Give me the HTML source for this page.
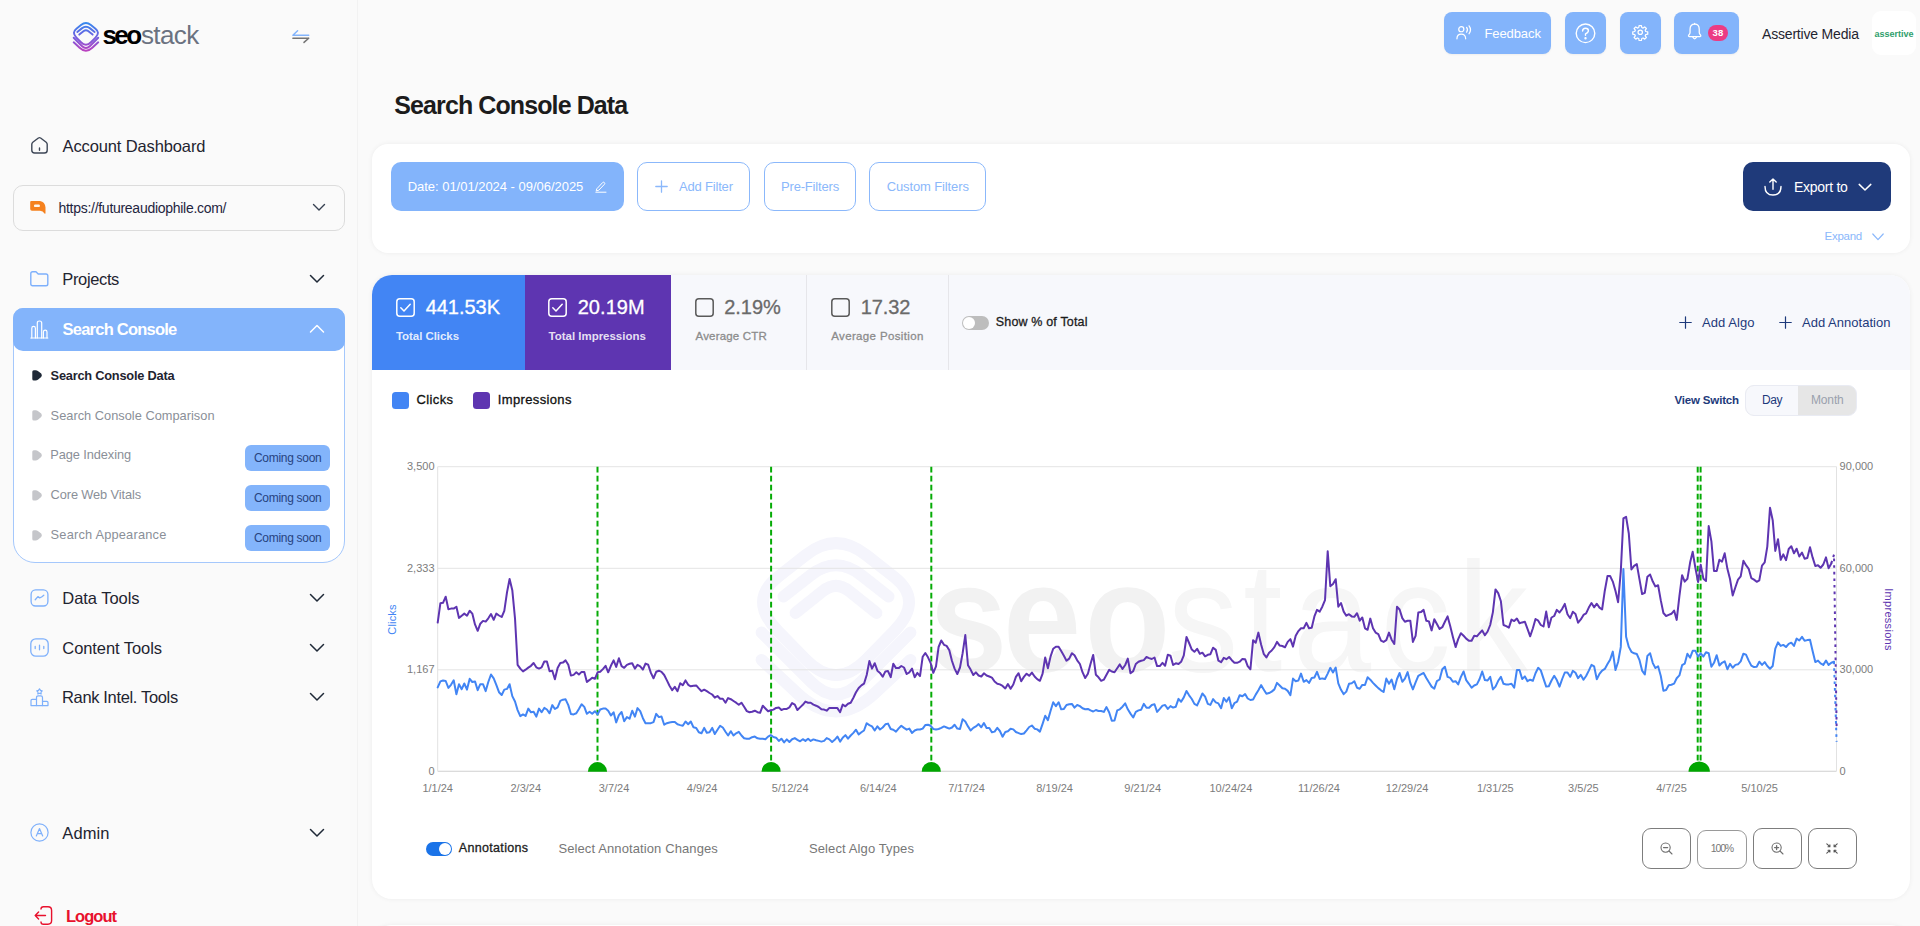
<!DOCTYPE html>
<html lang="en">
<head>
<meta charset="utf-8">
<title>Search Console Data - seostack</title>
<style>
*{box-sizing:border-box;margin:0;padding:0}
html,body{width:1920px;height:926px;overflow:hidden}
body{background:#fafafa;font-family:"Liberation Sans",sans-serif;color:#1f2937;position:relative}
.abs{position:absolute}
.t{position:absolute;white-space:nowrap;line-height:1}
svg{position:absolute;overflow:visible}
#sidebar{position:absolute;left:0;top:0;width:358px;height:926px;background:#fafafa;border-right:1px solid #f2f2f2}
.badge{position:absolute;left:245px;width:85px;height:26px;border-radius:6px;background:#83b4fb}
.hbtn{position:absolute;top:12px;height:42px;border-radius:8px;background:#83b4fb;box-shadow:0 1px 2px rgba(0,0,0,.05)}
.card{position:absolute;left:372px;width:1538px;background:#fff;border-radius:18px;box-shadow:0 0 5px rgba(0,0,0,.06)}
.fbtn{position:absolute;top:162px;height:49px;border-radius:10px;border:1px solid #8bb8fb;background:#fff}
.ax{font-size:11px;fill:#7c7c7c;font-family:"Liberation Sans",sans-serif}
</style>
</head>
<body>
<div id="sidebar">
<!-- logo -->
<svg style="left:72px;top:21px" width="28" height="32" viewBox="0 0 28 32">
<defs><linearGradient id="lg" gradientUnits="userSpaceOnUse" x1="0" y1="0" x2="0" y2="31"><stop offset="0" stop-color="#2f8ff0"/><stop offset="0.5" stop-color="#6e5fe0"/><stop offset="1" stop-color="#c040bd"/></linearGradient></defs>
<g fill="none" stroke="url(#lg)" stroke-width="1.95" stroke-linecap="round" stroke-linejoin="round">
<path d="M18.91 4.06 L23.49 7.66 Q28.45 11.55 23.49 16.6 L18.91 21.27 Q13.95 26.33 8.99 21.27 L4.41 16.6 Q-0.55 11.55 4.41 7.66 L8.99 4.06 Q13.95 0.17 18.91 4.06 Z"/>
<path d="M5.3 10.9 L9.77 7.39 Q13.95 4.11 18.13 7.39 L22.6 10.9"/>
<path d="M7.3 13.6 L11.77 10.02 Q13.95 8.28 16.13 10.02 L20.6 13.6"/>
<path d="M1.7 16.8 L9.85 24.95 Q13.95 29.05 18.05 24.95 L26.2 16.8"/>
<path d="M1.7 21.3 L7.6 26.83 Q13.95 32.77 20.3 26.83 L26.2 21.3"/>
</g></svg>
<span class="t" style="left:102.50px;top:21.99px;font-size:26px;font-weight:700;color:#000;letter-spacing:-2.601px;">seo</span>
<span class="t" style="left:141.00px;top:21.99px;font-size:26px;color:#6b7280;letter-spacing:-0.637px;">stack</span>
<!-- collapse arrows -->
<svg style="left:291px;top:29px" width="19" height="15" viewBox="0 0 19 15" fill="none" stroke-width="1.5" stroke-linecap="round" stroke-linejoin="round">
<path d="M1.9 6.2 H17.7 M1.9 6.2 L6.6 1.8" stroke="#83b4fb"/>
<path d="M1.9 9.2 H17.7 M17.7 9.2 L13 13.4" stroke="#747474"/>
</svg>
<!-- Account dashboard -->
<svg style="left:31px;top:137px" width="17" height="17" viewBox="0 0 17 17" fill="none" stroke="#3d4656" stroke-width="1.4" stroke-linecap="round" stroke-linejoin="round">
<path d="M0.8 7.2 Q0.8 6 1.8 5.2 L7.4 1 Q8.5 0.3 9.6 1 L15.2 5.2 Q16.2 6 16.2 7.2 V13.2 Q16.2 16 13.4 16 H3.6 Q0.8 16 0.8 13.2 Z"/>
<path d="M8.5 11 V13.2"/></svg>
<span class="t" style="left:62.50px;top:137.83px;font-size:16.5px;color:#1f2430;letter-spacing:-0.125px;">Account Dashboard</span>
<!-- site select -->
<div class="abs" style="left:13px;top:185px;width:332px;height:46px;border:1px solid #dcdcdc;border-radius:10px;background:#fafafa"></div>
<svg style="left:30px;top:200px" width="17" height="15" viewBox="0 0 17 15">
<path d="M1.3 1 H10 Q15.1 1.8 15.5 7.6 V12.8 Q15.5 14.5 14.5 13.4 Q13 10.9 10 10.8 H2 Q0.2 10.8 0.2 9 V2.1 Q0.2 1 1.3 1 Z" fill="#f5811e"/>
<rect x="4" y="4.4" width="5.9" height="2.7" rx="1.2" fill="#fdf6ee"/></svg>
<span class="t" style="left:58.50px;top:200.65px;font-size:14px;color:#1f2540;letter-spacing:-0.282px;">https://futureaudiophile.com/</span>
<svg style="left:312px;top:203px" width="14" height="9" viewBox="0 0 14 9" fill="none" stroke="#374151" stroke-width="1.4" stroke-linecap="round" stroke-linejoin="round"><path d="M1.5 1.5 L7 7 L12.5 1.5"/></svg>
<!-- Projects -->
<svg style="left:30px;top:271px" width="19" height="16" viewBox="0 0 19 16" fill="none" stroke="#7eb0fb" stroke-width="1.4" stroke-linejoin="round"><path d="M0.8 2.6 Q0.8 0.8 2.6 0.8 H6 L8.2 3 H16 Q17.8 3 17.8 4.8 V13 Q17.8 14.8 16 14.8 H2.6 Q0.8 14.8 0.8 13 Z"/></svg>
<span class="t" style="left:62.30px;top:271.03px;font-size:16.5px;color:#1f2430;letter-spacing:-0.363px;">Projects</span>
<svg style="left:309px;top:274px" width="16" height="10" viewBox="0 0 16 10" fill="none" stroke="#1f2937" stroke-width="1.5" stroke-linecap="round" stroke-linejoin="round"><path d="M1.5 1.5 L8 8 L14.5 1.5"/></svg>
<!-- Search Console active -->
<div class="abs" style="left:13px;top:308px;width:332px;height:255px;background:#fff;border:1px solid #a5c8fc;border-radius:10px 10px 22px 22px"></div>
<div class="abs" style="left:13px;top:308px;width:332px;height:43px;background:#83b4fb;border-radius:10px"></div>
<svg style="left:30px;top:319.6px" width="19" height="19" viewBox="0 0 19 19" fill="none" stroke="#fff" stroke-width="1.2" stroke-linecap="round" stroke-linejoin="round">
<path d="M0.8 18 H17.8"/><path d="M1.8 18 V8.2 Q1.8 6.4 3.6 6.4 Q5.4 6.4 5.4 8.2 V18"/><path d="M7.3 18 V3 Q7.3 1 9.5 1 Q11.7 1 11.7 3 V18"/><path d="M13.4 18 V12 Q13.4 10.2 15.2 10.2 Q17 10.2 17 12 V18"/></svg>
<span class="t" style="left:62.50px;top:321.03px;font-size:16.5px;font-weight:700;color:#fff;letter-spacing:-0.765px;">Search Console</span>
<svg style="left:309px;top:324px" width="16" height="10" viewBox="0 0 16 10" fill="none" stroke="#fff" stroke-width="1.5" stroke-linecap="round" stroke-linejoin="round"><path d="M1.5 8 L8 1.5 L14.5 8"/></svg>
<!-- sub items -->
<svg style="left:32px;top:370px" width="11" height="11" viewBox="0 0 11 11"><path d="M0.3 1.8 Q0.3 0.2 2 0.3 H3.6 Q5 0.4 6.2 1.2 L9.2 3.6 Q10.6 5.2 9.2 6.9 L6.2 9.6 Q5 10.5 3.6 10.6 H2 Q0.3 10.7 0.3 9.1 Z" fill="#1f2937"/></svg>
<span class="t" style="left:50.60px;top:369.56px;font-size:12.8px;font-weight:700;color:#1f2430;letter-spacing:-0.224px;">Search Console Data</span>
<svg style="left:32px;top:410px" width="11" height="11" viewBox="0 0 11 11"><path d="M0.3 1.8 Q0.3 0.2 2 0.3 H3.6 Q5 0.4 6.2 1.2 L9.2 3.6 Q10.6 5.2 9.2 6.9 L6.2 9.6 Q5 10.5 3.6 10.6 H2 Q0.3 10.7 0.3 9.1 Z" fill="#c5c6ca"/></svg>
<span class="t" style="left:50.60px;top:409.66px;font-size:12.8px;color:#8a8f98;letter-spacing:0.014px;">Search Console Comparison</span>
<svg style="left:32px;top:450px" width="11" height="11" viewBox="0 0 11 11"><path d="M0.3 1.8 Q0.3 0.2 2 0.3 H3.6 Q5 0.4 6.2 1.2 L9.2 3.6 Q10.6 5.2 9.2 6.9 L6.2 9.6 Q5 10.5 3.6 10.6 H2 Q0.3 10.7 0.3 9.1 Z" fill="#c5c6ca"/></svg>
<span class="t" style="left:50.30px;top:449.16px;font-size:12.8px;color:#8a8f98;letter-spacing:-0.088px;">Page Indexing</span>
<svg style="left:32px;top:490px" width="11" height="11" viewBox="0 0 11 11"><path d="M0.3 1.8 Q0.3 0.2 2 0.3 H3.6 Q5 0.4 6.2 1.2 L9.2 3.6 Q10.6 5.2 9.2 6.9 L6.2 9.6 Q5 10.5 3.6 10.6 H2 Q0.3 10.7 0.3 9.1 Z" fill="#c5c6ca"/></svg>
<span class="t" style="left:50.60px;top:489.36px;font-size:12.8px;color:#8a8f98;letter-spacing:-0.108px;">Core Web Vitals</span>
<svg style="left:32px;top:530px" width="11" height="11" viewBox="0 0 11 11"><path d="M0.3 1.8 Q0.3 0.2 2 0.3 H3.6 Q5 0.4 6.2 1.2 L9.2 3.6 Q10.6 5.2 9.2 6.9 L6.2 9.6 Q5 10.5 3.6 10.6 H2 Q0.3 10.7 0.3 9.1 Z" fill="#c5c6ca"/></svg>
<span class="t" style="left:50.60px;top:529.16px;font-size:12.8px;color:#8a8f98;letter-spacing:0.203px;">Search Appearance</span>
<div class="badge" style="top:445px"></div><span class="t" style="left:254.00px;top:451.84px;font-size:12px;color:#27437f;letter-spacing:-0.301px;">Coming soon</span>
<div class="badge" style="top:485px"></div><span class="t" style="left:254.00px;top:491.84px;font-size:12px;color:#27437f;letter-spacing:-0.301px;">Coming soon</span>
<div class="badge" style="top:525px"></div><span class="t" style="left:254.00px;top:531.84px;font-size:12px;color:#27437f;letter-spacing:-0.301px;">Coming soon</span>
<!-- Data Tools -->
<svg style="left:30px;top:589px" width="19" height="18" viewBox="0 0 19 18" fill="none" stroke="#7eb0fb" stroke-width="1.3" stroke-linecap="round" stroke-linejoin="round"><rect x="1.1" y="0.8" width="16.8" height="16.2" rx="4.5"/><path d="M5.2 10.7 L7.9 7.6 L9.7 8.9 L11.6 8 L13.8 6.2"/></svg>
<span class="t" style="left:62.30px;top:589.63px;font-size:16.5px;color:#1f2430;letter-spacing:-0.046px;">Data Tools</span>
<svg style="left:309px;top:593px" width="16" height="10" viewBox="0 0 16 10" fill="none" stroke="#1f2937" stroke-width="1.5" stroke-linecap="round" stroke-linejoin="round"><path d="M1.5 1.5 L8 8 L14.5 1.5"/></svg>
<!-- Content Tools -->
<svg style="left:30px;top:638px" width="19" height="19" viewBox="0 0 19 19" fill="none" stroke="#7eb0fb" stroke-width="1.3" stroke-linecap="round" stroke-linejoin="round"><rect x="0.8" y="0.8" width="17.4" height="17.4" rx="5"/><path d="M5.2 8.4 V10.6 M9.5 7.2 V11.8 M13.8 8.4 V10.6"/></svg>
<span class="t" style="left:62.30px;top:639.63px;font-size:16.5px;color:#1f2430;letter-spacing:-0.069px;">Content Tools</span>
<svg style="left:309px;top:643px" width="16" height="10" viewBox="0 0 16 10" fill="none" stroke="#1f2937" stroke-width="1.5" stroke-linecap="round" stroke-linejoin="round"><path d="M1.5 1.5 L8 8 L14.5 1.5"/></svg>
<!-- Rank Intel -->
<svg style="left:30px;top:688px" width="19" height="19" viewBox="0 0 19 19" fill="none" stroke="#7eb0fb" stroke-width="1.2" stroke-linecap="round" stroke-linejoin="round"><path d="M9.5 0.8 L10.5 2.4 L12.2 2.8 L11 4.2 L11.2 6 L9.5 5.3 L7.8 6 L8 4.2 L6.8 2.8 L8.5 2.4 Z"/><path d="M6.5 17.6 V9.4 Q6.5 7.8 8.1 7.8 H10.9 Q12.5 7.8 12.5 9.4 V17.6"/><path d="M6.5 11.4 H2.2 Q1 11.4 1 12.6 V17.6 H18 V14.6 Q18 13.4 16.8 13.4 H12.5"/></svg>
<span class="t" style="left:62.00px;top:689.33px;font-size:16.5px;color:#1f2430;letter-spacing:-0.346px;">Rank Intel. Tools</span>
<svg style="left:309px;top:692px" width="16" height="10" viewBox="0 0 16 10" fill="none" stroke="#1f2937" stroke-width="1.5" stroke-linecap="round" stroke-linejoin="round"><path d="M1.5 1.5 L8 8 L14.5 1.5"/></svg>
<!-- Admin -->
<svg style="left:30px;top:823px" width="19" height="19" viewBox="0 0 19 19" fill="none" stroke="#7eb0fb" stroke-width="1.2" stroke-linecap="round" stroke-linejoin="round"><circle cx="9.5" cy="9.5" r="8.6"/><path d="M6.3 13 L9.5 5.6 L12.7 13 M7.3 10.6 H11.7"/></svg>
<span class="t" style="left:62.30px;top:825.03px;font-size:16.5px;color:#1f2430;letter-spacing:0.106px;">Admin</span>
<svg style="left:309px;top:828px" width="16" height="10" viewBox="0 0 16 10" fill="none" stroke="#1f2937" stroke-width="1.5" stroke-linecap="round" stroke-linejoin="round"><path d="M1.5 1.5 L8 8 L14.5 1.5"/></svg>
<!-- Logout -->
<svg style="left:34px;top:906px" width="19" height="19" viewBox="0 0 19 19" fill="none" stroke="#e8112d" stroke-width="1.4" stroke-linecap="round" stroke-linejoin="round"><path d="M7 3 Q7 0.8 9.4 0.8 H14 Q17.6 0.8 17.6 4.4 V14.6 Q17.6 18.2 14 18.2 H9.4 Q7 18.2 7 16"/><path d="M11.5 9.5 H1.2 M4.6 6 L1.2 9.5 L4.6 13"/></svg>
<span class="t" style="left:66.00px;top:907.63px;font-size:16.5px;font-weight:700;color:#e8112d;letter-spacing:-0.982px;">Logout</span>
</div>

<!-- header buttons -->
<div class="hbtn" style="left:1443.6px;width:107.6px"></div>
<svg style="left:1456px;top:24.6px" width="18" height="15.2" viewBox="0 0 19 16" fill="none" stroke="#fff" stroke-width="1.3" stroke-linecap="round" stroke-linejoin="round">
<circle cx="5.6" cy="4.4" r="2.7"/><path d="M1 14.6 Q1 9.6 5.6 9.6 Q10.2 9.6 10.2 14.6"/><path d="M11.2 2.6 Q13 5 11.2 7.6"/><path d="M13.8 0.9 Q16.8 5 13.8 9.2"/></svg>
<span class="t" style="left:1484.50px;top:26.80px;font-size:13px;color:#fff;letter-spacing:-0.099px;">Feedback</span>
<div class="hbtn" style="left:1565px;width:41px"></div>
<svg style="left:1575px;top:22.5px" width="21" height="21" viewBox="0 0 21 21" fill="none" stroke="#fff" stroke-width="1.4" stroke-linecap="round" stroke-linejoin="round">
<circle cx="10.5" cy="10.3" r="9.3"/><path d="M7.6 8 Q7.6 5.2 10.5 5.2 Q13.4 5.2 13.4 7.8 Q13.4 9.6 10.5 10.8 V12.2"/><circle cx="10.5" cy="15.2" r="0.5" fill="#fff"/></svg>
<div class="hbtn" style="left:1620px;width:41px"></div>
<svg style="left:1631.8px;top:24.4px" width="16.5" height="16.5" viewBox="0 0 24 24" fill="none" stroke="#fff" stroke-width="1.8" stroke-linecap="round" stroke-linejoin="round">
<path d="M10.3 2.2 h3.4 l0.5 2.9 l1.9 0.8 l2.4-1.7 l2.4 2.4 l-1.7 2.4 l0.8 1.9 l2.9 0.5 v3.4 l-2.9 0.5 l-0.8 1.9 l1.7 2.4 l-2.4 2.4 l-2.4-1.7 l-1.9 0.8 l-0.5 2.9 h-3.4 l-0.5-2.9 l-1.9-0.8 l-2.4 1.7 l-2.4-2.4 l1.7-2.4 l-0.8-1.9 l-2.9-0.5 v-3.4 l2.9-0.5 l0.8-1.9 l-1.7-2.4 l2.4-2.4 l2.4 1.7 l1.9-0.8 z"/><circle cx="12" cy="12" r="3.2"/></svg>
<div class="hbtn" style="left:1674px;width:65px"></div>
<svg style="left:1687.1px;top:23.4px" width="15.3" height="18" viewBox="0 0 17 20" fill="none" stroke="#fff" stroke-width="1.4" stroke-linecap="round" stroke-linejoin="round">
<path d="M8.5 1.2 Q3.4 1.2 3.4 7 V10.6 Q3.4 12 2 13.4 Q1 14.8 2.6 15.2 H14.4 Q16 14.8 15 13.4 Q13.6 12 13.6 10.6 V7 Q13.6 1.2 8.5 1.2 Z"/><path d="M6.4 15.6 Q8.5 19.6 10.6 15.6"/><path d="M8.5 0.4 V1.2"/></svg>
<div class="abs" style="left:1708px;top:25px;width:20px;height:16px;border-radius:8px;background:#ec3b83"></div>
<span class="t" style="left:1712.40px;top:28.46px;font-size:9.5px;font-weight:700;color:#fff;letter-spacing:0.416px;">38</span>
<span class="t" style="left:1762.00px;top:26.85px;font-size:14px;color:#1f2430;letter-spacing:-0.186px;">Assertive Media</span>
<div class="abs" style="left:1872px;top:11px;width:44px;height:44px;border-radius:9px;background:#fff"></div>
<span class="t" style="left:1874.50px;top:29.68px;font-size:9px;font-weight:700;color:#2f9e6c;letter-spacing:-0.004px;">assertive</span>
<!-- title -->
<span class="t" style="left:394.30px;top:92.84px;font-size:25px;font-weight:700;color:#1c1c1c;letter-spacing:-0.900px;">Search Console Data</span>
<!-- filter card -->
<div class="card" style="top:144px;height:109px;border-radius:16px"></div>
<div class="abs" style="left:390.6px;top:162px;width:233.6px;height:49px;border-radius:10px;background:#83b4fb"></div>
<span class="t" style="left:407.70px;top:180.40px;font-size:13px;color:#fff;letter-spacing:-0.026px;">Date: 01/01/2024 - 09/06/2025</span>
<svg style="left:594.5px;top:181px" width="12" height="12" viewBox="0 0 12 12" fill="none" stroke="#fff" stroke-width="1" stroke-linecap="round" stroke-linejoin="round"><path d="M2 7.6 L7.8 1.4 Q8.6 0.8 9.4 1.6 Q10.2 2.4 9.5 3.2 L3.8 9.2 L1.6 9.8 Z"/><path d="M0.8 11.2 H11"/></svg>
<div class="fbtn" style="left:637px;width:113px"></div>
<svg style="left:654.5px;top:180px" width="13" height="13" viewBox="0 0 13 13" fill="none" stroke="#8bb8fb" stroke-width="1.3" stroke-linecap="round"><path d="M6.5 0.8 V12.2 M0.8 6.5 H12.2"/></svg>
<span class="t" style="left:679.00px;top:180.20px;font-size:13px;color:#8bb8fb;letter-spacing:-0.183px;">Add Filter</span>
<div class="fbtn" style="left:764px;width:92px"></div>
<span class="t" style="left:781.00px;top:180.20px;font-size:13px;color:#8bb8fb;letter-spacing:-0.177px;">Pre-Filters</span>
<div class="fbtn" style="left:869px;width:116.5px"></div>
<span class="t" style="left:886.70px;top:180.20px;font-size:13px;color:#8bb8fb;letter-spacing:-0.121px;">Custom Filters</span>
<div class="abs" style="left:1743px;top:162px;width:147.5px;height:49px;border-radius:10px;background:#1f3a7a"></div>
<svg style="left:1763.5px;top:177.5px" width="18" height="18" viewBox="0 0 18 18" fill="none" stroke="#fff" stroke-width="1.4" stroke-linecap="round" stroke-linejoin="round"><path d="M9 11.2 V1 M5.8 4 L9 1 L12.2 4"/><path d="M1 8.4 Q1 17 9 17 Q17 17 17 8.4"/></svg>
<span class="t" style="left:1794.00px;top:179.85px;font-size:14px;color:#fff;letter-spacing:-0.270px;">Export to</span>
<svg style="left:1858px;top:183px" width="14" height="9" viewBox="0 0 14 9" fill="none" stroke="#fff" stroke-width="1.5" stroke-linecap="round" stroke-linejoin="round"><path d="M1.2 1.4 L7 7 L12.8 1.4"/></svg>
<span class="t" style="left:1824.50px;top:230.57px;font-size:11.5px;color:#8bb8fb;letter-spacing:-0.251px;">Expand</span>
<svg style="left:1872px;top:232.5px" width="12" height="8" viewBox="0 0 12 8" fill="none" stroke="#8bb8fb" stroke-width="1.2" stroke-linecap="round" stroke-linejoin="round"><path d="M0.8 1 L6 6.6 L11.2 1"/></svg>

<!-- chart card -->
<div class="card" style="top:274.5px;height:624.5px;border-radius:20px;overflow:hidden">
<div class="abs" style="left:0;top:0;width:1538px;height:95.5px;background:#f7f8fc"></div>
<div class="abs" style="left:0;top:0;width:152.5px;height:95.5px;background:#4285f4"></div>
<div class="abs" style="left:152.5px;top:0;width:146.5px;height:95.5px;background:#5e35b1"></div>
<div class="abs" style="left:433.8px;top:0;width:1px;height:95.5px;background:#e6e6ea"></div>
<div class="abs" style="left:576px;top:0;width:1px;height:95.5px;background:#e6e6ea"></div>
</div>
<!-- stat 1 -->
<svg style="left:395.5px;top:298px" width="19" height="19" viewBox="0 0 19 19" fill="none" stroke="#fff" stroke-width="1.5" stroke-linecap="round" stroke-linejoin="round"><rect x="0.8" y="0.8" width="17.4" height="17.4" rx="3"/><path d="M4.8 9.8 L8 13 L14.2 6.2"/></svg>
<span class="t" style="left:425.70px;top:297.07px;font-size:20px;color:#fff;letter-spacing:-0.031px;-webkit-text-stroke:0.3px currentColor;">441.53K</span>
<span class="t" style="left:396.00px;top:330.57px;font-size:11.5px;font-weight:700;color:rgba(255,255,255,.86);letter-spacing:-0.058px;">Total Clicks</span>
<!-- stat 2 -->
<svg style="left:548.4px;top:298px" width="19" height="19" viewBox="0 0 19 19" fill="none" stroke="#fff" stroke-width="1.5" stroke-linecap="round" stroke-linejoin="round"><rect x="0.8" y="0.8" width="17.4" height="17.4" rx="3"/><path d="M4.8 9.8 L8 13 L14.2 6.2"/></svg>
<span class="t" style="left:577.70px;top:297.07px;font-size:20px;color:#fff;letter-spacing:0.048px;-webkit-text-stroke:0.3px currentColor;">20.19M</span>
<span class="t" style="left:548.60px;top:330.57px;font-size:11.5px;font-weight:700;color:rgba(255,255,255,.86);letter-spacing:-0.021px;">Total Impressions</span>
<!-- stat 3 -->
<svg style="left:695.3px;top:298px" width="19" height="19" viewBox="0 0 19 19" fill="none" stroke="#5a5a5a" stroke-width="1.5"><rect x="0.8" y="0.8" width="17.4" height="17.4" rx="3"/></svg>
<span class="t" style="left:724.20px;top:297.07px;font-size:20px;color:#6a6a6a;letter-spacing:-0.022px;-webkit-text-stroke:0.3px currentColor;">2.19%</span>
<span class="t" style="left:695.50px;top:330.57px;font-size:11.5px;color:#8c8c8c;letter-spacing:0.186px;-webkit-text-stroke:0.3px currentColor;">Average CTR</span>
<!-- stat 4 -->
<svg style="left:831px;top:298px" width="19" height="19" viewBox="0 0 19 19" fill="none" stroke="#5a5a5a" stroke-width="1.5"><rect x="0.8" y="0.8" width="17.4" height="17.4" rx="3"/></svg>
<span class="t" style="left:860.80px;top:297.07px;font-size:20px;color:#6a6a6a;letter-spacing:-0.110px;-webkit-text-stroke:0.3px currentColor;">17.32</span>
<span class="t" style="left:831.20px;top:330.57px;font-size:11.5px;color:#8c8c8c;letter-spacing:0.366px;-webkit-text-stroke:0.3px currentColor;">Average Position</span>
<!-- toggle -->
<div class="abs" style="left:961.5px;top:315.5px;width:27px;height:14.5px;border-radius:8px;background:#bdbdbd"></div>
<div class="abs" style="left:963px;top:317px;width:11.5px;height:11.5px;border-radius:6px;background:#fff"></div>
<span class="t" style="left:995.80px;top:315.72px;font-size:12.5px;color:#1c1c1c;letter-spacing:0.160px;-webkit-text-stroke:0.3px currentColor;">Show % of Total</span>
<!-- add algo / annotation -->
<svg style="left:1679px;top:316px" width="13" height="13" viewBox="0 0 14 14" fill="none" stroke="#1e3a7b" stroke-width="1.3" stroke-linecap="round"><path d="M7 0.8 V13.2 M0.8 7 H13.2"/></svg>
<span class="t" style="left:1702.00px;top:315.90px;font-size:13px;color:#1e3a7b;letter-spacing:0.057px;">Add Algo</span>
<svg style="left:1779px;top:316px" width="13" height="13" viewBox="0 0 14 14" fill="none" stroke="#1e3a7b" stroke-width="1.3" stroke-linecap="round"><path d="M7 0.8 V13.2 M0.8 7 H13.2"/></svg>
<span class="t" style="left:1802.00px;top:315.90px;font-size:13px;color:#1e3a7b;letter-spacing:0.022px;">Add Annotation</span>
<!-- legend -->
<div class="abs" style="left:392px;top:392px;width:17px;height:17px;border-radius:3.5px;background:#4285f4"></div>
<span class="t" style="left:416.60px;top:393.30px;font-size:13px;color:#111;letter-spacing:0.372px;-webkit-text-stroke:0.3px currentColor;">Clicks</span>
<div class="abs" style="left:473px;top:392px;width:17px;height:17px;border-radius:3.5px;background:#5e35b1"></div>
<span class="t" style="left:497.80px;top:393.30px;font-size:13px;color:#111;letter-spacing:0.356px;-webkit-text-stroke:0.3px currentColor;">Impressions</span>
<!-- view switch -->
<span class="t" style="left:1674.40px;top:395.27px;font-size:11.5px;font-weight:700;color:#1e3a7b;letter-spacing:-0.150px;">View Switch</span>
<div class="abs" style="left:1745px;top:385px;width:111.5px;height:30.5px;border-radius:9px;background:#e6e6e6;overflow:hidden;border:1px solid #e9ebf3"><div class="abs" style="left:0;top:0;width:52px;height:30px;background:#f7f8fc"></div></div>
<span class="t" style="left:1762.00px;top:394.14px;font-size:12px;color:#1e3a7b;letter-spacing:-0.380px;">Day</span>
<span class="t" style="left:1811.00px;top:394.14px;font-size:12px;color:#9aa1ad;letter-spacing:-0.151px;">Month</span>
<!-- bottom controls -->
<div class="abs" style="left:425.5px;top:841.5px;width:26.5px;height:14.5px;border-radius:8px;background:#1a73e8"></div>
<div class="abs" style="left:439px;top:843px;width:11.5px;height:11.5px;border-radius:6px;background:#fff"></div>
<span class="t" style="left:458.80px;top:841.92px;font-size:12.5px;color:#1c1c1c;letter-spacing:0.325px;-webkit-text-stroke:0.3px currentColor;">Annotations</span>
<span class="t" style="left:558.40px;top:842.00px;font-size:13px;color:#777;letter-spacing:0.110px;">Select Annotation Changes</span>
<span class="t" style="left:809.00px;top:842.00px;font-size:13px;color:#777;letter-spacing:0.111px;">Select Algo Types</span>
<div class="abs" style="left:1642px;top:828px;width:49px;height:41px;border-radius:9px;border:1px solid #7d7d7d;background:#fff"></div>
<svg style="left:1660px;top:842px" width="13" height="13" viewBox="0 0 13 13" fill="none" stroke="#6e6e6e" stroke-width="1.1" stroke-linecap="round"><circle cx="5.6" cy="5.6" r="4.6"/><path d="M9 9 L12 12"/><path d="M3.6 5.6 H7.6" stroke-width="1.4"/></svg>
<div class="abs" style="left:1697px;top:829.5px;width:50px;height:39px;border-radius:9px;border:1px solid #9a9a9a;background:#fff"></div>
<span class="t" style="left:1710.80px;top:843.31px;font-size:10.5px;color:#777;letter-spacing:-1.164px;">100%</span>
<div class="abs" style="left:1753px;top:828px;width:49px;height:41px;border-radius:9px;border:1px solid #7d7d7d;background:#fff"></div>
<svg style="left:1771px;top:842px" width="13" height="13" viewBox="0 0 13 13" fill="none" stroke="#6e6e6e" stroke-width="1.1" stroke-linecap="round"><circle cx="5.6" cy="5.6" r="4.6"/><path d="M9 9 L12 12"/><path d="M3.6 5.6 H7.6 M5.6 3.6 V7.6" stroke-width="1.3"/></svg>
<div class="abs" style="left:1807.5px;top:828px;width:49px;height:41px;border-radius:9px;border:1px solid #7d7d7d;background:#fff"></div>
<svg style="left:1826px;top:843px" width="12" height="11" viewBox="0 0 12 11" fill="none" stroke="#555" stroke-width="1.1" stroke-linecap="round" stroke-linejoin="round"><path d="M0.8 0.8 L3.6 3.4 M3.9 1.9 V3.7 H2"/><path d="M11.2 0.8 L8.4 3.4 M8.1 1.9 V3.7 H10"/><path d="M0.8 10.2 L3.6 7.6 M3.9 9.1 V7.3 H2"/><path d="M11.2 10.2 L8.4 7.6 M8.1 9.1 V7.3 H10"/></svg>
<!-- next card peek -->
<div class="card" style="top:924.5px;height:40px;border-radius:20px"></div>

<svg style="left:0;top:0" width="1920" height="926" viewBox="0 0 1920 926">
<g fill="none" stroke="#f5f5fc" stroke-width="1.95" stroke-linecap="round" stroke-linejoin="round" transform="translate(751.2,530.3) scale(6.08)"><path d="M18.91 4.06 L23.49 7.66 Q28.45 11.55 23.49 16.6 L18.91 21.27 Q13.95 26.33 8.99 21.27 L4.41 16.6 Q-0.55 11.55 4.41 7.66 L8.99 4.06 Q13.95 0.17 18.91 4.06 Z"/><path d="M5.3 10.9 L9.77 7.39 Q13.95 4.11 18.13 7.39 L22.6 10.9"/><path d="M7.3 13.6 L11.77 10.02 Q13.95 8.28 16.13 10.02 L20.6 13.6"/><path d="M1.7 16.8 L9.85 24.95 Q13.95 29.05 18.05 24.95 L26.2 16.8"/><path d="M1.7 21.3 L7.6 26.83 Q13.95 32.77 20.3 26.83 L26.2 21.3"/></g>
<text transform="translate(0,671) scale(0.90,1)" x="1032.4 1114.4 1205.0" font-family="Liberation Sans, sans-serif" font-size="156" font-weight="700" fill="#f2f2f2">seo</text>
<text transform="translate(0,671) scale(0.90,1)" x="1297.7 1381.5 1436.6 1533.8 1619.6" font-family="Liberation Sans, sans-serif" font-size="156" fill="#f6f6f6">stack</text>
<path d="M437.7 466.70 H1836.5" stroke="#e4e4e4" stroke-width="1"/>
<path d="M437.7 568.30 H1836.5" stroke="#e4e4e4" stroke-width="1"/>
<path d="M437.7 669.80 H1836.5" stroke="#e4e4e4" stroke-width="1"/>
<path d="M437.7 771.25 H1836.5" stroke="#cfcfcf" stroke-width="1.2"/>
<path d="M437.70 466.7 V771.2" stroke="#e2e2e2" stroke-width="1"/>
<path d="M1836.50 466.7 V771.2" stroke="#e2e2e2" stroke-width="1"/>
<path d="M597.5 466.7 V762.2" stroke="#06ab06" stroke-width="2" stroke-dasharray="5.8 3.2"/>
<path d="M587.9 771.65 A9.6 9.6 0 0 1 607.1 771.65 Z" fill="#00a600"/>
<path d="M771.1 466.7 V762.2" stroke="#06ab06" stroke-width="2" stroke-dasharray="5.8 3.2"/>
<path d="M761.5 771.65 A9.6 9.6 0 0 1 780.7 771.65 Z" fill="#00a600"/>
<path d="M931.3 466.7 V762.2" stroke="#06ab06" stroke-width="2" stroke-dasharray="5.8 3.2"/>
<path d="M921.7 771.65 A9.6 9.6 0 0 1 940.9 771.65 Z" fill="#00a600"/>
<path d="M1697.7 466.7 V762.2" stroke="#06ab06" stroke-width="2" stroke-dasharray="5.8 3.2"/>
<path d="M1700.6 466.7 V762.2" stroke="#06ab06" stroke-width="2" stroke-dasharray="5.8 3.2"/>
<path d="M1688.5 771.65 A10.7 10.2 0 0 1 1709.9 771.65 Z" fill="#00a600"/>
<path d="M437.7,687.4 L440.4,681.4 L443.0,680.5 L445.7,681.0 L448.4,687.9 L451.0,684.8 L453.7,680.3 L456.4,694.3 L459.0,684.2 L461.7,689.2 L464.3,683.5 L467.0,689.6 L469.7,678.8 L472.3,682.0 L475.0,681.4 L477.7,690.2 L480.3,684.2 L483.0,684.2 L485.7,691.1 L488.3,682.0 L491.0,674.5 L493.7,678.4 L496.3,684.8 L499.0,692.2 L501.7,695.0 L504.3,689.6 L507.0,688.9 L509.6,684.2 L512.3,696.1 L515.0,701.5 L517.6,710.1 L520.3,716.2 L523.0,714.4 L525.6,715.9 L528.3,708.6 L531.0,712.3 L533.6,711.8 L536.3,716.6 L539.0,708.6 L541.6,712.3 L544.3,707.9 L546.9,709.5 L549.6,713.3 L552.3,705.1 L554.9,709.0 L557.6,707.3 L560.3,700.8 L562.9,699.7 L565.6,699.3 L568.3,705.1 L570.9,714.0 L573.6,714.4 L576.3,713.3 L578.9,709.0 L581.6,704.3 L584.3,706.9 L586.9,713.8 L589.6,711.8 L592.2,713.8 L594.9,711.2 L597.6,714.4 L600.2,709.5 L602.9,708.6 L605.6,708.6 L608.2,710.8 L610.9,715.5 L613.6,712.3 L616.2,722.4 L618.9,715.1 L621.6,712.0 L624.2,721.2 L626.9,717.1 L629.6,718.7 L632.2,710.7 L634.9,716.7 L637.5,708.1 L640.2,711.1 L642.9,718.2 L645.5,723.2 L648.2,723.2 L650.9,723.2 L653.5,722.1 L656.2,713.9 L658.9,717.1 L661.5,716.5 L664.2,724.7 L666.9,723.2 L669.5,722.5 L672.2,722.1 L674.8,721.9 L677.5,724.3 L680.2,725.1 L682.8,725.8 L685.5,721.5 L688.2,724.3 L690.8,721.5 L693.5,727.3 L696.2,727.9 L698.8,732.3 L701.5,733.3 L704.2,727.9 L706.8,732.7 L709.5,732.3 L712.2,727.9 L714.8,734.0 L717.5,729.7 L720.1,725.8 L722.8,727.5 L725.5,731.8 L728.1,735.5 L730.8,731.2 L733.5,735.5 L736.1,733.3 L738.8,731.8 L741.5,735.5 L744.1,738.3 L746.8,738.7 L749.5,738.7 L752.1,737.2 L754.8,736.6 L757.5,738.3 L760.1,738.7 L762.8,738.7 L765.4,739.2 L768.1,736.6 L770.8,735.1 L773.4,737.0 L776.1,737.7 L778.8,740.9 L781.4,738.7 L784.1,742.4 L786.8,739.4 L789.4,742.0 L792.1,739.2 L794.8,738.1 L797.4,739.8 L800.1,741.3 L802.8,739.2 L805.4,740.9 L808.1,738.7 L810.7,740.9 L813.4,739.4 L816.1,740.3 L818.7,740.9 L821.4,741.6 L824.1,740.9 L826.7,738.1 L829.4,739.4 L832.1,742.0 L834.7,739.8 L837.4,736.6 L840.1,741.6 L842.7,737.7 L845.4,735.1 L848.0,738.7 L850.7,735.5 L853.4,732.9 L856.0,729.7 L858.7,734.4 L861.4,732.3 L864.0,730.5 L866.7,723.2 L869.4,725.1 L872.0,726.4 L874.7,730.5 L877.4,726.4 L880.0,729.5 L882.7,727.5 L885.4,724.3 L888.0,723.6 L890.7,729.0 L893.3,729.7 L896.0,731.6 L898.7,728.4 L901.3,725.8 L904.0,727.9 L906.7,729.7 L909.3,728.6 L912.0,732.9 L914.7,730.5 L917.3,729.5 L920.0,729.5 L922.7,728.6 L925.3,725.1 L928.0,724.7 L930.7,725.8 L933.3,729.0 L936.0,729.5 L938.6,729.0 L941.3,727.9 L944.0,726.4 L946.6,727.5 L949.3,728.6 L952.0,727.5 L954.6,724.7 L957.3,728.6 L960.0,729.0 L962.6,719.3 L965.3,721.5 L968.0,726.4 L970.6,730.5 L973.3,727.9 L975.9,726.4 L978.6,724.1 L981.3,727.3 L983.9,723.0 L986.6,727.9 L989.3,727.9 L991.9,732.3 L994.6,731.6 L997.3,727.9 L999.9,731.0 L1002.6,736.7 L1005.3,732.0 L1007.9,731.3 L1010.6,728.7 L1013.3,729.4 L1015.9,732.0 L1018.6,733.1 L1021.2,734.1 L1023.9,733.5 L1026.6,730.3 L1029.2,727.0 L1031.9,725.5 L1034.6,728.7 L1037.2,729.4 L1039.9,731.6 L1042.6,723.8 L1045.2,715.8 L1047.9,720.1 L1050.6,710.8 L1053.2,702.2 L1055.9,706.1 L1058.6,702.2 L1061.2,709.3 L1063.9,708.9 L1066.5,705.0 L1069.2,704.3 L1071.9,703.9 L1074.5,707.6 L1077.2,705.0 L1079.9,706.1 L1082.5,708.2 L1085.2,709.3 L1087.9,708.9 L1090.5,710.4 L1093.2,711.5 L1095.9,710.0 L1098.5,711.0 L1101.2,711.0 L1103.8,711.9 L1106.5,707.1 L1109.2,712.5 L1111.8,720.8 L1114.5,720.5 L1117.2,710.4 L1119.8,709.3 L1122.5,706.7 L1125.2,703.3 L1127.8,709.3 L1130.5,713.6 L1133.2,717.5 L1135.8,711.9 L1138.5,710.4 L1141.2,709.7 L1143.8,703.9 L1146.5,707.8 L1149.1,707.8 L1151.8,705.0 L1154.5,704.3 L1157.1,711.9 L1159.8,708.9 L1162.5,705.6 L1165.1,705.0 L1167.8,708.9 L1170.5,706.1 L1173.1,707.6 L1175.8,706.7 L1178.5,698.9 L1181.1,701.7 L1183.8,697.4 L1186.5,691.0 L1189.1,695.3 L1191.8,699.0 L1194.4,703.9 L1197.1,705.4 L1199.8,699.5 L1202.4,693.5 L1205.1,696.7 L1207.8,703.9 L1210.4,704.9 L1213.1,699.1 L1215.8,702.4 L1218.4,703.4 L1221.1,708.2 L1223.8,698.0 L1226.4,701.7 L1229.1,697.4 L1231.8,708.2 L1234.4,703.2 L1237.1,701.7 L1239.7,695.2 L1242.4,696.3 L1245.1,694.1 L1247.7,698.5 L1250.4,700.0 L1253.1,699.5 L1255.7,694.6 L1258.4,690.3 L1261.1,685.1 L1263.7,689.4 L1266.4,693.7 L1269.1,693.1 L1271.7,691.6 L1274.4,689.4 L1277.0,682.9 L1279.7,685.5 L1282.4,688.3 L1285.0,688.7 L1287.7,690.9 L1290.4,695.2 L1293.0,678.6 L1295.7,681.2 L1298.4,680.5 L1301.0,673.6 L1303.7,681.8 L1306.4,680.1 L1309.0,682.9 L1311.7,677.9 L1314.4,677.5 L1317.0,671.9 L1319.7,679.0 L1322.3,678.4 L1325.0,679.0 L1327.7,673.6 L1330.3,667.8 L1333.0,672.5 L1335.7,667.6 L1338.3,683.3 L1341.0,689.8 L1343.7,694.1 L1346.3,691.6 L1349.0,683.8 L1351.7,683.3 L1354.3,681.2 L1357.0,687.7 L1359.7,688.7 L1362.3,684.9 L1365.0,684.9 L1367.6,677.3 L1370.3,679.7 L1373.0,682.9 L1375.6,685.5 L1378.3,688.1 L1381.0,690.3 L1383.6,692.0 L1386.3,678.6 L1389.0,683.8 L1391.6,679.5 L1394.3,689.2 L1397.0,679.0 L1399.6,673.0 L1402.3,681.8 L1404.9,678.6 L1407.6,672.1 L1410.3,682.9 L1412.9,689.4 L1415.6,682.3 L1418.3,675.8 L1420.9,674.3 L1423.6,673.0 L1426.3,677.9 L1428.9,682.3 L1431.6,686.6 L1434.3,688.7 L1436.9,681.2 L1439.6,679.5 L1442.3,669.3 L1444.9,666.7 L1447.6,676.9 L1450.2,677.9 L1452.9,681.8 L1455.6,681.2 L1458.2,684.4 L1460.9,676.9 L1463.6,671.5 L1466.2,680.1 L1468.9,683.8 L1471.6,687.7 L1474.2,685.5 L1476.9,684.4 L1479.6,679.0 L1482.2,671.5 L1484.9,680.1 L1487.6,680.5 L1490.2,676.9 L1492.9,689.4 L1495.5,686.6 L1498.2,680.8 L1500.9,676.9 L1503.5,683.8 L1506.2,684.4 L1508.9,684.4 L1511.5,683.8 L1514.2,687.7 L1516.9,670.0 L1519.5,670.0 L1522.2,679.0 L1524.9,676.4 L1527.5,681.2 L1530.2,679.7 L1532.9,680.8 L1535.5,673.2 L1538.2,667.8 L1540.8,670.4 L1543.5,678.6 L1546.2,686.6 L1548.8,686.2 L1551.5,680.5 L1554.2,675.8 L1556.8,680.1 L1559.5,686.6 L1562.2,679.0 L1564.8,672.5 L1567.5,672.5 L1570.2,676.8 L1572.8,670.9 L1575.5,672.8 L1578.1,678.2 L1580.8,674.9 L1583.5,679.7 L1586.1,676.0 L1588.8,670.6 L1591.5,664.8 L1594.1,666.3 L1596.8,679.3 L1599.5,673.9 L1602.1,670.6 L1604.8,668.9 L1607.5,664.1 L1610.1,659.8 L1612.8,651.6 L1615.5,670.0 L1618.1,662.0 L1620.8,646.9 L1623.4,569.1 L1626.1,636.7 L1628.8,646.9 L1631.4,651.8 L1634.1,653.3 L1636.8,654.0 L1639.4,659.8 L1642.1,670.6 L1644.8,674.5 L1647.4,655.9 L1650.1,653.3 L1652.8,663.1 L1655.4,668.0 L1658.1,666.3 L1660.8,676.0 L1663.4,690.7 L1666.1,690.1 L1668.7,685.3 L1671.4,684.7 L1674.1,683.6 L1676.7,678.2 L1679.4,675.4 L1682.1,665.2 L1684.7,663.7 L1687.4,653.8 L1690.1,657.7 L1692.7,650.8 L1695.4,650.8 L1698.1,656.6 L1700.7,653.3 L1703.4,656.6 L1706.0,652.3 L1708.7,653.2 L1711.4,666.7 L1714.0,662.8 L1716.7,655.2 L1719.4,665.6 L1722.0,662.8 L1724.7,661.3 L1727.4,669.3 L1730.0,663.9 L1732.7,667.8 L1735.4,664.9 L1738.0,664.3 L1740.7,661.3 L1743.4,653.7 L1746.0,654.6 L1748.7,660.6 L1751.3,665.6 L1754.0,667.1 L1756.7,666.7 L1759.3,661.7 L1762.0,664.9 L1764.7,662.1 L1767.3,666.0 L1770.0,668.8 L1772.7,666.0 L1775.3,648.7 L1778.0,642.3 L1780.7,645.9 L1783.3,644.9 L1786.0,647.0 L1788.7,643.8 L1791.3,642.7 L1794.0,645.9 L1796.6,638.6 L1799.3,640.5 L1802.0,636.9 L1804.6,640.8 L1807.3,640.1 L1810.0,639.7 L1812.6,650.9 L1815.3,662.1 L1818.0,660.6 L1820.6,663.4 L1823.3,664.9 L1826.0,660.6 L1828.6,664.9 L1831.3,662.8 L1834.0,661.7" fill="none" stroke="#4285f4" stroke-width="2" stroke-linejoin="round" stroke-linecap="round"/>
<path d="M437.7,622.6 L440.4,603.2 L443.0,602.8 L445.7,596.7 L448.4,609.2 L451.0,608.6 L453.7,608.6 L456.4,606.7 L459.0,617.9 L461.7,615.7 L464.3,613.6 L467.0,615.7 L469.7,610.8 L472.3,613.6 L475.0,624.4 L477.7,630.8 L480.3,623.7 L483.0,620.9 L485.7,621.6 L488.3,618.3 L491.0,614.0 L493.7,619.8 L496.3,613.6 L499.0,615.5 L501.7,617.0 L504.3,610.8 L507.0,592.4 L509.6,579.0 L512.3,590.2 L515.0,618.3 L517.6,664.8 L520.3,668.6 L523.0,671.4 L525.6,669.7 L528.3,667.6 L531.0,665.8 L533.6,663.0 L536.3,667.3 L539.0,668.6 L541.6,667.3 L544.3,661.5 L546.9,661.5 L549.6,671.2 L552.3,670.8 L554.9,679.2 L557.6,668.0 L560.3,663.0 L562.9,662.6 L565.6,660.4 L568.3,664.8 L570.9,675.6 L573.6,674.9 L576.3,672.3 L578.9,674.5 L581.6,671.9 L584.3,671.9 L586.9,682.0 L589.6,679.9 L592.2,677.7 L594.9,678.8 L597.6,672.3 L600.2,671.7 L602.9,669.1 L605.6,665.8 L608.2,672.3 L610.9,665.8 L613.6,660.4 L616.2,666.9 L618.9,658.3 L621.6,666.1 L624.2,667.8 L626.9,664.9 L629.6,663.8 L632.2,663.2 L634.9,668.6 L637.5,664.9 L640.2,666.4 L642.9,669.6 L645.5,663.6 L648.2,664.7 L650.9,672.9 L653.5,678.3 L656.2,671.8 L658.9,670.7 L661.5,671.8 L664.2,675.0 L666.9,680.4 L669.5,685.8 L672.2,690.2 L674.8,686.9 L677.5,691.2 L680.2,683.2 L682.8,685.2 L685.5,680.4 L688.2,684.8 L690.8,686.3 L693.5,685.8 L696.2,685.4 L698.8,688.4 L701.5,691.2 L704.2,689.7 L706.8,691.2 L709.5,693.0 L712.2,694.5 L714.8,697.7 L717.5,696.0 L720.1,698.8 L722.8,698.8 L725.5,702.7 L728.1,698.1 L730.8,699.2 L733.5,701.0 L736.1,702.7 L738.8,704.8 L741.5,702.7 L744.1,706.8 L746.8,711.1 L749.5,712.2 L752.1,711.7 L754.8,710.7 L757.5,712.2 L760.1,712.8 L762.8,705.7 L765.4,708.5 L768.1,711.3 L770.8,710.2 L773.4,709.6 L776.1,707.9 L778.8,707.4 L781.4,710.0 L784.1,708.9 L786.8,708.9 L789.4,707.4 L792.1,703.1 L794.8,704.6 L797.4,710.0 L800.1,707.4 L802.8,704.8 L805.4,701.6 L808.1,702.7 L810.7,702.7 L813.4,704.6 L816.1,705.7 L818.7,707.0 L821.4,709.2 L824.1,709.6 L826.7,710.7 L829.4,707.9 L832.1,708.1 L834.7,708.1 L837.4,708.1 L840.1,712.2 L842.7,704.6 L845.4,706.3 L848.0,703.8 L850.7,702.7 L853.4,697.7 L856.0,692.3 L858.7,688.0 L861.4,685.4 L864.0,683.7 L866.7,675.0 L869.4,661.0 L872.0,668.6 L874.7,663.2 L877.4,670.7 L880.0,672.9 L882.7,676.8 L885.4,671.4 L888.0,671.1 L890.7,677.2 L893.3,663.8 L896.0,668.1 L898.7,668.1 L901.3,666.0 L904.0,667.5 L906.7,674.0 L909.3,672.4 L912.0,668.6 L914.7,677.2 L917.3,672.9 L920.0,676.1 L922.7,656.7 L925.3,653.0 L928.0,657.3 L930.7,663.2 L933.3,672.9 L936.0,666.4 L938.6,647.0 L941.3,640.5 L944.0,644.8 L946.6,645.9 L949.3,650.2 L952.0,661.0 L954.6,668.6 L957.3,674.0 L960.0,667.5 L962.6,653.4 L965.3,635.1 L968.0,665.3 L970.6,669.6 L973.3,675.0 L975.9,672.4 L978.6,675.5 L981.3,676.5 L983.9,673.3 L986.6,675.5 L989.3,676.5 L991.9,677.6 L994.6,681.5 L997.3,683.7 L999.9,684.4 L1002.6,685.9 L1005.3,688.4 L1007.9,684.0 L1010.6,688.8 L1013.3,684.5 L1015.9,676.9 L1018.6,673.2 L1021.2,681.2 L1023.9,676.9 L1026.6,673.7 L1029.2,675.8 L1031.9,672.6 L1034.6,676.5 L1037.2,679.1 L1039.9,680.8 L1042.6,673.7 L1045.2,657.5 L1047.9,668.3 L1050.6,656.4 L1053.2,648.8 L1055.9,646.7 L1058.6,646.7 L1061.2,651.0 L1063.9,655.7 L1066.5,660.7 L1069.2,658.6 L1071.9,653.2 L1074.5,655.3 L1077.2,660.3 L1079.9,664.0 L1082.5,672.2 L1085.2,678.0 L1087.9,673.7 L1090.5,664.0 L1093.2,654.9 L1095.9,674.8 L1098.5,677.3 L1101.2,680.8 L1103.8,679.7 L1106.5,674.8 L1109.2,669.8 L1111.8,671.5 L1114.5,672.2 L1117.2,668.3 L1119.8,664.4 L1122.5,668.9 L1125.2,665.0 L1127.8,658.6 L1130.5,673.2 L1133.2,671.1 L1135.8,664.0 L1138.5,661.8 L1141.2,660.7 L1143.8,660.1 L1146.5,657.0 L1149.1,658.1 L1151.8,659.0 L1154.5,657.5 L1157.1,666.1 L1159.8,666.1 L1162.5,662.9 L1165.1,665.7 L1167.8,654.7 L1170.5,655.7 L1173.1,665.0 L1175.8,663.3 L1178.5,664.0 L1181.1,661.8 L1183.8,655.3 L1186.5,637.0 L1189.1,643.0 L1191.8,649.6 L1194.4,651.8 L1197.1,648.8 L1199.8,653.8 L1202.4,652.7 L1205.1,656.3 L1207.8,654.8 L1210.4,654.2 L1213.1,647.7 L1215.8,649.9 L1218.4,660.7 L1221.1,662.2 L1223.8,657.9 L1226.4,659.2 L1229.1,657.0 L1231.8,660.2 L1234.4,662.8 L1237.1,662.8 L1239.7,661.7 L1242.4,658.9 L1245.1,659.2 L1247.7,666.1 L1250.4,669.3 L1253.1,640.2 L1255.7,642.7 L1258.4,632.6 L1261.1,644.5 L1263.7,653.8 L1266.4,657.4 L1269.1,652.7 L1271.7,650.5 L1274.4,647.1 L1277.0,641.9 L1279.7,645.6 L1282.4,646.0 L1285.0,647.3 L1287.7,641.9 L1290.4,639.1 L1293.0,646.6 L1295.7,635.8 L1298.4,631.1 L1301.0,628.3 L1303.7,628.3 L1306.4,622.9 L1309.0,628.3 L1311.7,627.8 L1314.4,616.4 L1317.0,609.9 L1319.7,611.6 L1322.3,606.7 L1325.0,600.2 L1327.7,551.2 L1330.3,586.2 L1333.0,584.0 L1335.7,579.2 L1338.3,606.7 L1341.0,603.0 L1343.7,611.6 L1346.3,615.7 L1349.0,614.2 L1351.7,616.4 L1354.3,616.8 L1357.0,613.2 L1359.7,620.7 L1362.3,617.5 L1365.0,628.3 L1367.6,629.8 L1370.3,618.6 L1373.0,628.3 L1375.6,632.6 L1378.3,634.1 L1381.0,640.6 L1383.6,641.9 L1386.3,640.2 L1389.0,632.6 L1391.6,639.7 L1394.3,644.0 L1397.0,606.7 L1399.6,609.5 L1402.3,618.1 L1404.9,621.8 L1407.6,620.7 L1410.3,620.7 L1412.9,641.9 L1415.6,635.8 L1418.3,612.5 L1420.9,612.1 L1423.6,609.9 L1426.3,620.7 L1428.9,621.4 L1431.6,630.4 L1434.3,619.2 L1436.9,624.0 L1439.6,628.9 L1442.3,627.2 L1444.9,621.8 L1447.6,616.4 L1450.2,626.1 L1452.9,636.9 L1455.6,647.1 L1458.2,639.1 L1460.9,633.2 L1463.6,635.8 L1466.2,638.6 L1468.9,640.8 L1471.6,640.8 L1474.2,635.8 L1476.9,636.3 L1479.6,633.2 L1482.2,630.4 L1484.9,635.2 L1487.6,631.5 L1490.2,625.0 L1492.9,612.1 L1495.5,589.4 L1498.2,593.1 L1500.9,601.3 L1503.5,625.0 L1506.2,626.1 L1508.9,627.6 L1511.5,619.6 L1514.2,621.1 L1516.9,618.6 L1519.5,623.3 L1522.2,622.4 L1524.9,621.8 L1527.5,628.9 L1530.2,636.3 L1532.9,628.3 L1535.5,619.0 L1538.2,620.7 L1540.8,625.0 L1543.5,626.5 L1546.2,611.6 L1548.8,627.2 L1551.5,617.5 L1554.2,616.0 L1556.8,609.9 L1559.5,612.5 L1562.2,608.8 L1564.8,603.9 L1567.5,614.2 L1570.2,618.2 L1572.8,611.8 L1575.5,614.0 L1578.1,622.7 L1580.8,619.4 L1583.5,614.9 L1586.1,613.4 L1588.8,607.6 L1591.5,603.0 L1594.1,607.3 L1596.8,603.7 L1599.5,607.6 L1602.1,609.5 L1604.8,590.7 L1607.5,576.0 L1610.1,576.0 L1612.8,581.6 L1615.5,591.1 L1618.1,602.2 L1620.8,571.3 L1623.4,518.4 L1626.1,516.8 L1628.8,533.5 L1631.4,569.5 L1634.1,565.9 L1636.8,564.1 L1639.4,578.8 L1642.1,594.0 L1644.8,592.9 L1647.4,576.7 L1650.1,574.5 L1652.8,581.6 L1655.4,586.4 L1658.1,585.3 L1660.8,600.4 L1663.4,613.0 L1666.1,616.0 L1668.7,614.9 L1671.4,613.8 L1674.1,610.6 L1676.7,619.9 L1679.4,596.1 L1682.1,575.2 L1684.7,581.6 L1687.4,578.8 L1690.1,562.6 L1692.7,551.8 L1695.4,568.0 L1698.1,582.1 L1700.7,564.8 L1703.4,578.8 L1706.0,581.0 L1708.7,526.1 L1711.4,541.4 L1714.0,571.0 L1716.7,571.0 L1719.4,559.8 L1722.0,561.7 L1724.7,553.3 L1727.4,568.8 L1730.0,579.0 L1732.7,595.4 L1735.4,587.2 L1738.0,579.6 L1740.7,576.4 L1743.4,560.8 L1746.0,565.2 L1748.7,568.8 L1751.3,578.1 L1754.0,579.6 L1756.7,581.8 L1759.3,580.3 L1762.0,565.6 L1764.7,562.4 L1767.3,546.6 L1770.0,507.7 L1772.7,520.2 L1775.3,550.9 L1778.0,539.2 L1780.7,559.8 L1783.3,554.4 L1786.0,560.2 L1788.7,549.0 L1791.3,546.2 L1794.0,553.3 L1796.6,548.7 L1799.3,556.5 L1802.0,552.6 L1804.6,558.7 L1807.3,558.0 L1810.0,547.2 L1812.6,557.4 L1815.3,566.0 L1818.0,565.2 L1820.6,567.8 L1823.3,564.5 L1826.0,557.4 L1828.6,568.2 L1831.3,563.4" fill="none" stroke="#5e35b1" stroke-width="2" stroke-linejoin="round" stroke-linecap="round"/>
<path d="M1834.0,661.7 L1836.6,741.8" fill="none" stroke="#4285f4" stroke-width="2" stroke-dasharray="2.6 4"/>
<path d="M1831.3,563.4 L1834.0,554.6 L1836.6,726.0" fill="none" stroke="#5e35b1" stroke-width="2" stroke-dasharray="2.6 4"/>
<text class="ax" x="434.5" y="470.3" text-anchor="end">3,500</text>
<text class="ax" x="434.5" y="571.9" text-anchor="end">2,333</text>
<text class="ax" x="434.5" y="673.4" text-anchor="end">1,167</text>
<text class="ax" x="434.5" y="774.9" text-anchor="end">0</text>
<text class="ax" x="1839.6" y="470.3">90,000</text>
<text class="ax" x="1839.6" y="571.9">60,000</text>
<text class="ax" x="1839.6" y="673.4">30,000</text>
<text class="ax" x="1839.6" y="774.9">0</text>
<text class="ax" x="437.7" y="791.7" text-anchor="middle">1/1/24</text>
<text class="ax" x="525.8" y="791.7" text-anchor="middle">2/3/24</text>
<text class="ax" x="614.0" y="791.7" text-anchor="middle">3/7/24</text>
<text class="ax" x="702.1" y="791.7" text-anchor="middle">4/9/24</text>
<text class="ax" x="790.2" y="791.7" text-anchor="middle">5/12/24</text>
<text class="ax" x="878.3" y="791.7" text-anchor="middle">6/14/24</text>
<text class="ax" x="966.5" y="791.7" text-anchor="middle">7/17/24</text>
<text class="ax" x="1054.6" y="791.7" text-anchor="middle">8/19/24</text>
<text class="ax" x="1142.7" y="791.7" text-anchor="middle">9/21/24</text>
<text class="ax" x="1230.9" y="791.7" text-anchor="middle">10/24/24</text>
<text class="ax" x="1319.0" y="791.7" text-anchor="middle">11/26/24</text>
<text class="ax" x="1407.1" y="791.7" text-anchor="middle">12/29/24</text>
<text class="ax" x="1495.3" y="791.7" text-anchor="middle">1/31/25</text>
<text class="ax" x="1583.4" y="791.7" text-anchor="middle">3/5/25</text>
<text class="ax" x="1671.5" y="791.7" text-anchor="middle">4/7/25</text>
<text class="ax" x="1759.6" y="791.7" text-anchor="middle">5/10/25</text>
<text class="ax" style="fill:#4285f4" transform="translate(395.7,619.5) rotate(-90)" text-anchor="middle" letter-spacing="0.2">Clicks</text>
<text class="ax" style="fill:#5e35b1" transform="translate(1884.6,619.5) rotate(90)" text-anchor="middle" letter-spacing="0.3">Impressions</text>
</svg>

</body>
</html>
